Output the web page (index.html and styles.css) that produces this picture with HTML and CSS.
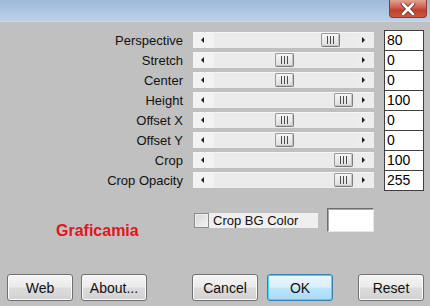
FILE: index.html
```html
<!DOCTYPE html>
<html lang="en">
<head>
<meta charset="UTF-8" />
<title>Perspective</title>
<link rel="stylesheet" href="styles.css">
</head>
<body>

<div class="titlebar">
    <button class="close" title="Close">
        <svg width="18" height="12" viewBox="0 0 18 12">
            <path d="M4 1 L14 11 M14 1 L4 11" stroke="#6a3a34" stroke-width="4.4" stroke-linecap="round" />
            <path d="M4 1 L14 11 M14 1 L4 11" stroke="#ffffff" stroke-width="2.6" stroke-linecap="round" />
        </svg>
    </button>
</div>

<div class="params">
    <label class="name">Perspective</label>
    <div class="track"><span class="arrow left"></span><span class="groove"><span class="thumb" style="left: 107px"></span></span><span class="arrow right"></span></div>
    <div class="value">80</div>

    <label class="name">Stretch</label>
    <div class="track"><span class="arrow left"></span><span class="groove"><span class="thumb" style="left: 61px"></span></span><span class="arrow right"></span></div>
    <div class="value">0</div>

    <label class="name">Center</label>
    <div class="track"><span class="arrow left"></span><span class="groove"><span class="thumb" style="left: 61px"></span></span><span class="arrow right"></span></div>
    <div class="value">0</div>

    <label class="name">Height</label>
    <div class="track"><span class="arrow left"></span><span class="groove"><span class="thumb" style="left: 120px"></span></span><span class="arrow right"></span></div>
    <div class="value">100</div>

    <label class="name">Offset X</label>
    <div class="track"><span class="arrow left"></span><span class="groove"><span class="thumb" style="left: 61px"></span></span><span class="arrow right"></span></div>
    <div class="value">0</div>

    <label class="name">Offset Y</label>
    <div class="track"><span class="arrow left"></span><span class="groove"><span class="thumb" style="left: 61px"></span></span><span class="arrow right"></span></div>
    <div class="value">0</div>

    <label class="name">Crop</label>
    <div class="track"><span class="arrow left"></span><span class="groove"><span class="thumb" style="left: 120px"></span></span><span class="arrow right"></span></div>
    <div class="value">100</div>

    <label class="name">Crop Opacity</label>
    <div class="track"><span class="arrow left"></span><span class="groove"><span class="thumb" style="left: 120px"></span></span><span class="arrow right"></span></div>
    <div class="value">255</div>
</div>

<div class="options">
    <div class="brand">Graficamia</div>
    <label class="check"><span class="box"></span><span class="check-text">Crop BG Color</span></label>
    <div class="swatch"></div>
</div>

<div class="buttons">
    <button class="btn">Web</button>
    <button class="btn">About...</button>
    <button class="btn cancel">Cancel</button>
    <button class="btn ok">OK</button>
    <button class="btn reset">Reset</button>
</div>

</body>
</html>
```

FILE: styles.css
```css
body {
    margin: 0;
    background: #c0c0c0;
    font-family: "Liberation Sans", Arial, sans-serif;
    font-size: 13px;
    color: #111;
    width: 430px;
    height: 306px;
    overflow: hidden;
}
.titlebar {
    height: 22px;
    box-sizing: border-box;
    background: linear-gradient(#9dbad8, #bcd2e9);
    border-bottom: 1px solid #c9d8e8;
    display: flex;
    justify-content: flex-end;
    padding-right: 3px;
}
.close {
    width: 38px;
    height: 18px;
    padding: 0;
    border: 1px solid #8e3a2e;
    border-top: none;
    border-radius: 0 0 4px 4px;
    background: linear-gradient(#e2a394, #cf5c4b 45%, #c23f2c 60%, #cc5a3e);
    display: flex;
    align-items: center;
    justify-content: center;
}
.params {
    display: grid;
    grid-template-columns: 183px 181px 40px;
    grid-auto-rows: 20px;
    column-gap: 10px;
    padding-top: 8px;
}
.name {
    text-align: right;
    line-height: 20px;
    padding-top: 1px;
}
.track {
    margin-top: 2px;
    height: 16px;
    display: flex;
    background: #ebebeb;
    border-top: 1px solid #f6f6f6;
    box-sizing: border-box;
}
.arrow {
    width: 21px;
    position: relative;
    background: #f2f2f2;
}
.arrow.right {
    width: 19px;
    background: #ececec;
}
.arrow::after {
    content: "";
    position: absolute;
    top: 4px;
    border-top: 3px solid transparent;
    border-bottom: 3px solid transparent;
}
.arrow.left::after {
    left: 8px;
    border-right: 3px solid #1c1c1c;
}
.arrow.right::after {
    left: 7px;
    border-left: 3px solid #1c1c1c;
}
.groove {
    flex: 1;
    position: relative;
}
.thumb {
    position: absolute;
    top: 0;
    width: 19px;
    height: 14px;
    box-sizing: border-box;
    border: 1px solid #9a9a9a;
    border-right-color: #7d7d7d;
    border-bottom-color: #7d7d7d;
    border-radius: 2px;
    background: linear-gradient(#f6f6f6, #dedede);
    box-shadow: inset -1px -1px 0 #c4c4c4;
}
.thumb::after {
    content: "";
    position: absolute;
    left: 5px;
    top: 2px;
    width: 7px;
    height: 8px;
    background: repeating-linear-gradient(to right, #4b4b4b 0 1px, transparent 1px 3px);
}
.value {
    height: 21px;
    box-sizing: border-box;
    border: 1px solid #3f3f3f;
    background: #fff;
    padding-left: 2px;
    line-height: 19px;
    font-size: 14px;
    color: #000;
}
.options {
    height: 84px;
    box-sizing: border-box;
    padding-top: 18px;
    display: flex;
    align-items: flex-start;
}
.brand {
    width: 194px;
    flex-shrink: 0;
    box-sizing: border-box;
    padding-left: 56px;
    margin-top: 14px;
    font-size: 16px;
    line-height: 18px;
    font-weight: bold;
    color: #e3141c;
}
.check {
    display: flex;
    margin-top: 5px;
    height: 15px;
}
.box {
    width: 15px;
    height: 15px;
    box-sizing: border-box;
    border: 1px solid #8c8c8c;
    background: linear-gradient(135deg, #d6d6d6, #f4f4f4);
    box-shadow: inset 0 0 0 1px #efefef;
}
.check-text {
    width: 109px;
    background: #efefef;
    padding-left: 4px;
    box-sizing: border-box;
    line-height: 15px;
    font-size: 13px;
}
.swatch {
    margin-left: 9px;
    width: 47px;
    height: 24px;
    box-sizing: border-box;
    background: #fff;
    border: 1px solid;
    border-color: #6e6e6e #e6e6e6 #e6e6e6 #6e6e6e;
    box-shadow: inset 1px 1px 0 #a8a8a8;
}
.buttons {
    display: flex;
    padding-left: 7px;
    gap: 8px;
}
.btn {
    width: 66px;
    height: 27px;
    padding: 0;
    border: 1px solid #707070;
    border-radius: 3px;
    background: linear-gradient(#f4f4f4 0%, #ebebeb 48%, #dcdcdc 52%, #d2d2d2 100%);
    box-shadow: inset 0 0 0 1px #fbfbfb;
    font-family: "Liberation Sans", Arial, sans-serif;
    font-size: 14px;
    color: #111;
}
.cancel {
    margin-left: 37px;
}
.ok {
    margin-left: 1px;
    border-color: #3c7fb1;
    background: linear-gradient(#eaf6fd 0%, #d9f0fc 48%, #bee6fd 52%, #a7d9f5 100%);
    box-shadow: inset 0 0 0 1px #48d3f8;
}
.reset {
    margin-left: 17px;
}
```
